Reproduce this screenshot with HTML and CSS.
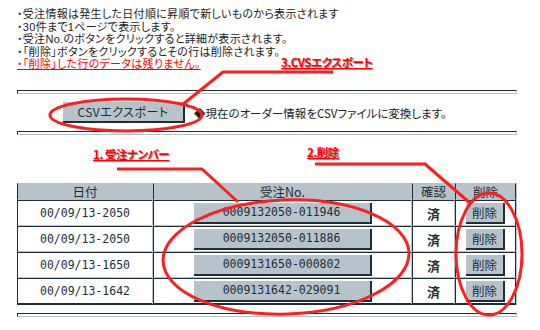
FILE: index.html
```html
<!DOCTYPE html>
<html lang="ja">
<head>
    <meta charset="UTF-8">
    <title>受注情報一覧</title>
    <link rel="stylesheet" href="styles.css">
</head>
<body>
<div class="page">
    <!-- 注意書き -->
    <ul class="notes">
        <li>・受注情報は発生した日付順に昇順で新しいものから表示されます</li>
        <li>・30件まで1ページで表示します。</li>
        <li>・受注No.のボタンをクリックすると詳細が表示されます。</li>
        <li>・「削除」ボタンをクリックするとその行は削除されます。</li>
        <li><span class="warn">・「削除」した行のデータは残りません。</span></li>
    </ul>

    <div class="rule"></div>
    <div class="export">
        <button class="csv-btn">CSVエクスポート</button>
        <span class="export-note">◆現在のオーダー情報をCSVファイルに変換します。</span>
    </div>
    <div class="rule"></div>

    <!-- 受注一覧 -->
    <table class="orders">
        <thead>
            <tr>
                <th class="col-date">日付</th>
                <th class="col-no">受注No.</th>
                <th class="col-check">確認</th>
                <th class="col-del">削除</th>
            </tr>
        </thead>
        <tbody>
            <tr>
                <td class="date">00/09/13-2050</td>
                <td><button class="order-btn">0009132050-011946</button></td>
                <td class="done">済</td>
                <td><button class="del-btn">削除</button></td>
            </tr>
            <tr>
                <td class="date">00/09/13-2050</td>
                <td><button class="order-btn">0009132050-011886</button></td>
                <td class="done">済</td>
                <td><button class="del-btn">削除</button></td>
            </tr>
            <tr>
                <td class="date">00/09/13-1650</td>
                <td><button class="order-btn">0009131650-000802</button></td>
                <td class="done">済</td>
                <td><button class="del-btn">削除</button></td>
            </tr>
            <tr>
                <td class="date">00/09/13-1642</td>
                <td><button class="order-btn">0009131642-029091</button></td>
                <td class="done">済</td>
                <td><button class="del-btn">削除</button></td>
            </tr>
        </tbody>
    </table>
    <div class="rule rule-last"></div>

    <!-- 説明用の赤ペン -->
    <svg class="marks" width="540" height="330" viewBox="0 0 540 330">
        <path d="M333 72 L223 72 L182 105" />
        <ellipse cx="126" cy="115" rx="76" ry="16" />
        <path d="M117 169 L202 169 L238 202" />
        <ellipse cx="286" cy="257" rx="123" ry="57" transform="rotate(-2 286 257)" />
        <path d="M315 164 L425 164 L470 203" />
        <ellipse cx="489" cy="254" rx="33" ry="61" />
    </svg>
    <span class="tag tag-csv">3.CVSエクスポート</span>
    <span class="tag tag-no">1. 受注ナンバー</span>
    <span class="tag tag-del">2.削除</span>
</div>
</body>
</html>
```

FILE: styles.css
```css
body {
    margin: 0;
    background: #fff;
    font-family: "Noto Sans CJK JP", "Noto Sans", sans-serif;
    font-feature-settings: "palt";
    color: #222;
}

.page {
    position: relative;
    width: 540px;
    height: 330px;
    overflow: hidden;
}

.notes {
    list-style: none;
    margin: 0 0 0 17px;
    padding: 8px 0 0;
    height: 82px;
    font-family: "Liberation Sans", "Noto Sans CJK JP", sans-serif;
    font-size: 11px;
    line-height: 12.5px;
    letter-spacing: 0.3px;
}

.warn {
    color: #ff0000;
    text-decoration: underline;
}

.rule {
    box-sizing: border-box;
    width: 500px;
    height: 4px;
    margin-left: 17px;
    border-top: 1px solid #1d2e38;
    border-left: 1px solid #1d2e38;
    border-bottom: 1px solid #b7c3cb;
    border-right: 1px solid #b7c3cb;
}

.export {
    display: flex;
    align-items: center;
    padding: 8px 0 8px 63px;
}

button {
    box-sizing: border-box;
    padding: 0;
    border: none;
    border-right: 2px solid #1d2e38;
    border-bottom: 2px solid #1d2e38;
    background: #b7c3cb;
    color: #1d2e38;
    font-family: "Noto Sans CJK JP", "Noto Sans", sans-serif;
    font-feature-settings: "palt";
}

.csv-btn {
    width: 122px;
    height: 21px;
    font-size: 12px;
    letter-spacing: 0.5px;
}

.export-note {
    margin-left: 9px;
    font-size: 11.5px;
    color: #222;
}

.orders {
    box-sizing: border-box;
    width: 500px;
    margin: 48px 0 0 17px;
    table-layout: fixed;
    border-collapse: separate;
    border-spacing: 0;
    border-right: 1px solid #b7c3cb;
    color: #1d2e38;
}

.orders th,
.orders td {
    box-sizing: border-box;
    padding: 0;
    text-align: center;
    vertical-align: middle;
    border-left: 1px solid #1d2e38;
    border-right: 1px solid #b7c3cb;
}

.orders th {
    height: 17px;
    background: #b7c3cb;
    border-top: 1px solid #b7c3cb;
    border-bottom: 1px solid #b7c3cb;
    font-weight: normal;
    font-size: 12.5px;
    line-height: 15px;
}

.orders td {
    height: 26px;
    background: #fff;
    border-top: 1px solid #1d2e38;
    border-bottom: 1px solid #b7c3cb;
}

.orders tbody tr:last-child td {
    border-bottom: 2px solid #1d2e38;
    height: 27px;
}

.orders th:last-child,
.orders td:last-child {
    border-right: 1px solid #1d2e38;
}

.col-date { width: 136px; }
.col-no { width: 259px; }
.col-check { width: 43px; }
.col-del { width: 61px; }

.date {
    font-family: "DejaVu Sans Mono", monospace;
    font-size: 11.5px;
}

.order-btn {
    display: block;
    width: 178px;
    height: 21px;
    margin: 0 auto;
    font-family: "DejaVu Sans Mono", monospace;
    font-size: 11.5px;
}

.del-btn {
    display: block;
    width: 39px;
    height: 21px;
    margin: 0 auto;
    font-size: 12.5px;
}

.done {
    font-weight: bold;
    font-size: 13px;
}

.rule-last {
    margin-top: 8px;
}

/* 赤ペンの書き込み */
.marks {
    position: absolute;
    left: 0;
    top: 0;
    pointer-events: none;
}

.marks path,
.marks ellipse {
    fill: none;
    stroke: #ff1e1e;
    stroke-width: 3;
    stroke-linejoin: round;
}

.tag {
    position: absolute;
    font-size: 11.5px;
    font-weight: bold;
    line-height: 14px;
    letter-spacing: -0.4px;
    color: #ff0000;
    text-decoration: underline;
    text-shadow: 1px 1px 0 #9aa0a6;
    white-space: nowrap;
}

.tag-csv { left: 281px; top: 55px; }
.tag-no { left: 93px; top: 147px; }
.tag-del { left: 307px; top: 145px; }
```
